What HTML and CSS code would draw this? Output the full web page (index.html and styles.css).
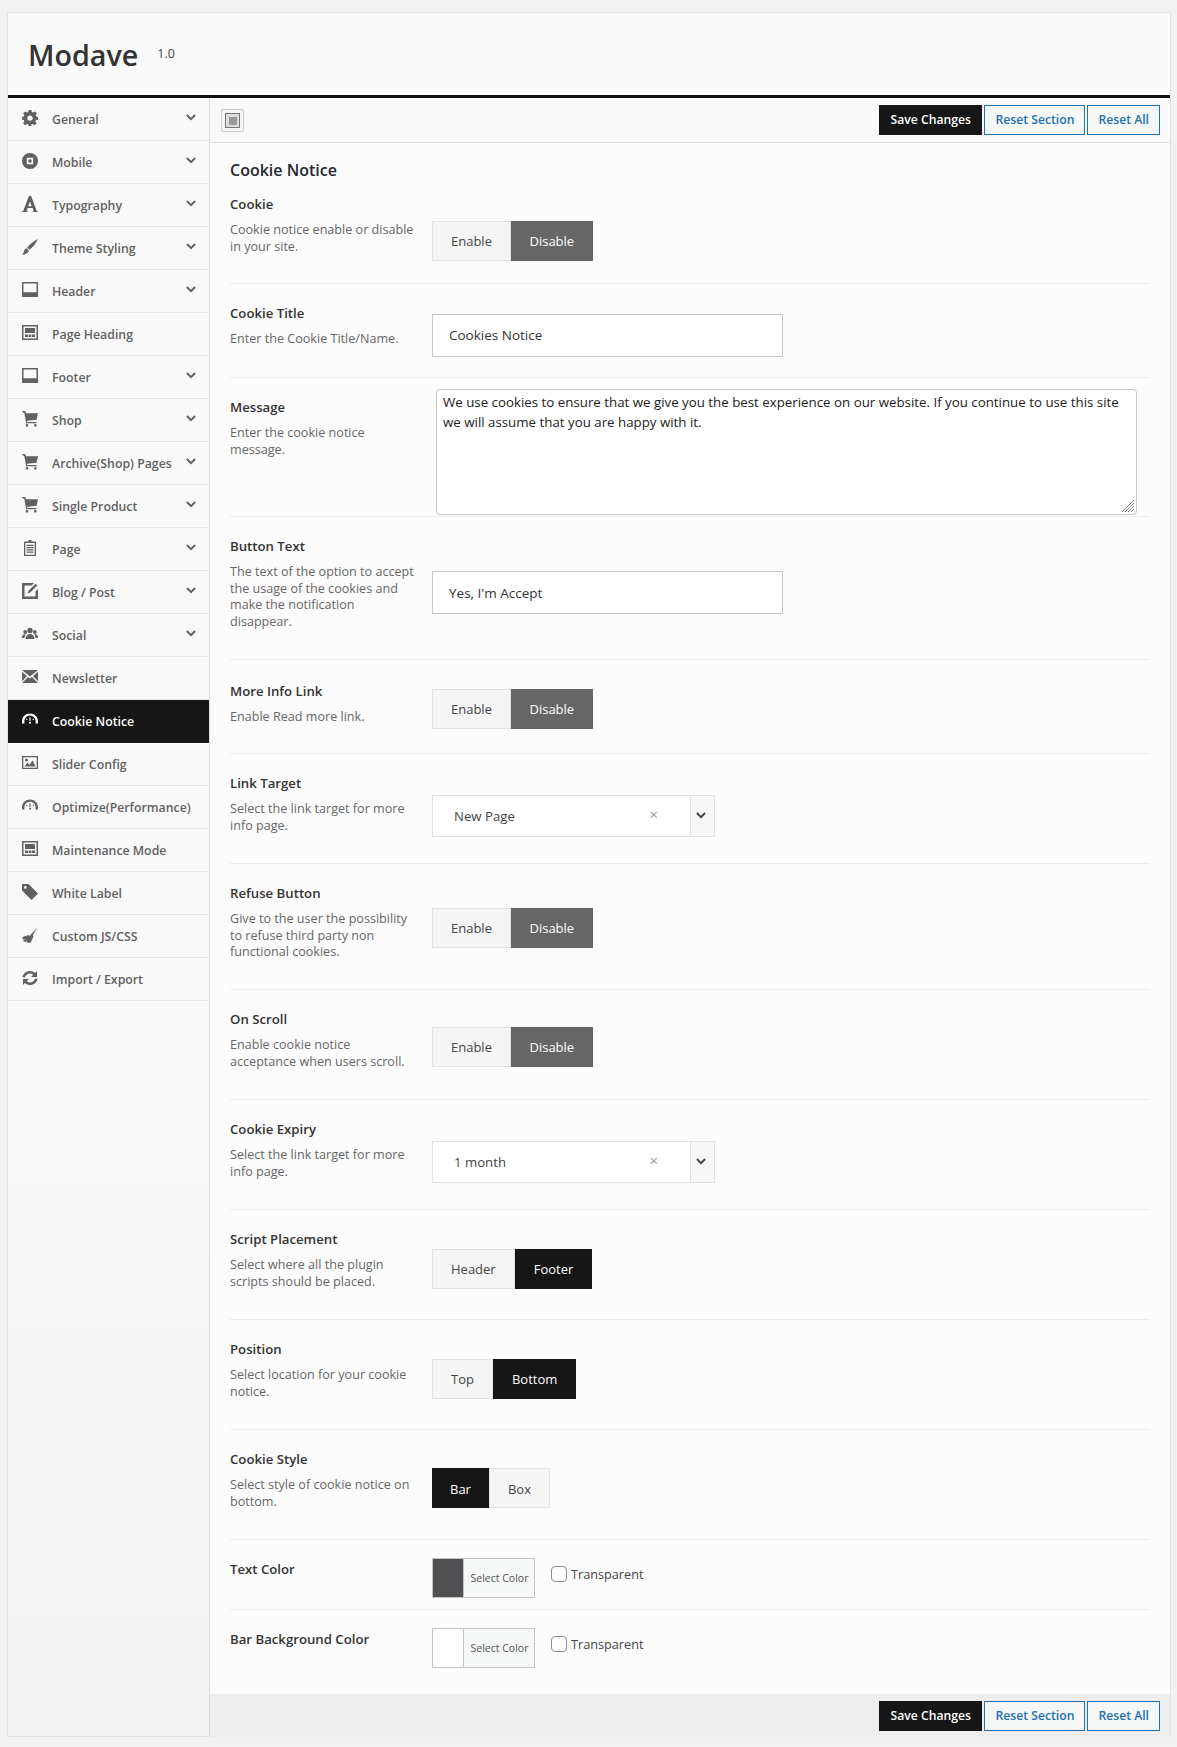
FILE: index.html
```html
<!DOCTYPE html>
<html lang="en">
<head>
<meta charset="utf-8">
<title>Modave Options</title>
<link rel="stylesheet" href="styles.css">
</head>
<body>
<svg class="defs" width="0" height="0">
  <symbol id="i-gear" viewBox="0 0 16 16"><path d="M6.6 0h2.8l.4 2.1 1.3.5L12.9 1.4l2 2-1.2 1.8.5 1.3 1.8.4v2.8l-2.1.4-.5 1.3 1.2 1.8-2 2-1.8-1.2-1.3.5-.4 2.1H6.6l-.4-2.1-1.3-.5-1.8 1.2-2-2 1.2-1.8-.5-1.3L0 9.6V6.800l1.800-.4.5-1.300L1.100 3.400l2-2L4.900 2.600l1.300-.5zM8 5.400a2.700 2.700 0 1 0 0 5.400 2.700 2.700 0 0 0 0-5.400z" fill-rule="evenodd"/></symbol>
  <symbol id="i-mobile" viewBox="0 0 16 16"><path d="M8 0a8 8 0 1 1 0 16A8 8 0 0 1 8 0zM4.800 4.800v6.400h6.400V4.800zM6.400 6.400h3.200v3.200H6.400z" fill-rule="evenodd"/></symbol>
  <symbol id="i-type" viewBox="0 0 16 16"><path d="M0 16v-.6l1.200-.5L6.900 0h2.200l5.700 14.900 1.200.5v.6h-5.600v-.6l1.300-.5-1.100-2.900H5.700l-1.100 2.900 1.300.5v.6zM6.300 10.300h3.400L8 5.600z"/></symbol>
  <symbol id="i-brush" viewBox="0 0 16 16"><path d="M16 0c-1.500 3.500-5 8-8.500 10.800L5.200 8.600C8 5.200 12.500 1.500 16 0zM4.600 9.300l2.200 2.200C6.400 14 3 15.500 0 16c1.800-1.300 1.500-3 2.300-4.800.5-1 1.300-1.600 2.300-1.900z"/></symbol>
  <symbol id="i-header" viewBox="0 0 16 16"><path d="M0 0h16v15H0zM1.500 1.500v8.800h13V1.500z" fill-rule="evenodd"/></symbol>
  <symbol id="i-layout" viewBox="0 0 16 16"><path d="M0 0h16v15H0zM1.500 1.500v12h13v-12zM3 3h10v5H3zM3 9.500h3v2.500H3zM6.700 9.500h2.600v2.500H6.700zM10 9.500h3v2.500h-3z" fill-rule="evenodd"/></symbol>
  <symbol id="i-cart" viewBox="0 0 16 16"><path d="M0 0h2.300c.7 0 1.100.4 1.300 1l.4 1.300h12l-1.400 6.400-9.600 1 .3 1.300h9.300v1.300H4.200L2.300 2 .6 1.300zM5 13a1.300 1.300 0 1 1 0 2.700A1.300 1.300 0 0 1 5 13zm8.300 0a1.300 1.300 0 1 1 0 2.700 1.300 1.300 0 0 1 0-2.700z"/></symbol>
  <symbol id="i-clip" viewBox="0 0 16 16"><path d="M6.500 0h3v1.500H14V16H2V1.500h4.500zM3.300 3v11.700h9.400V3zM4.500 4.700h7v1.200h-7zM4.500 7h7v1.200h-7zM4.500 9.300h7v1.200h-7zM4.500 11.600h7v1.200h-7z" fill-rule="evenodd"/></symbol>
  <symbol id="i-edit" viewBox="0 0 16 16"><path d="M0 0h12l-2.500 2.500H2.500v11h11V8.500L16 6v10H0zM13.500.8l1.700 1.700-7 7-2.700 1 1-2.700z" fill-rule="evenodd"/></symbol>
  <symbol id="i-group" viewBox="0 0 16 16"><circle cx="8" cy="4.500" r="2.700"/><circle cx="3.200" cy="6" r="1.900"/><circle cx="12.800" cy="6" r="1.900"/><path d="M3.500 13c0-3 1.800-5 4.500-5s4.500 2 4.500 5zM0 12c0-2 .8-3.700 2.800-3.700.4 0 .8.100 1 .2-.8 1-1.300 2.100-1.400 3.500zM16 12c0-2-.8-3.700-2.800-3.700-.4 0-.8.100-1 .2.800 1 1.300 2.100 1.400 3.500z"/></symbol>
  <symbol id="i-mail" viewBox="0 0 16 16"><path d="M0 1h16L8 7.500zM0 2.800l5 4.200-5 5.200zM16 2.800v9.400L11 7zM6 7.900l2 1.600 2-1.600 6 6.100H0z"/></symbol>
  <symbol id="i-gauge" viewBox="0 0 16 16"><path d="M8 1.500c4.500 0 8 3.300 8 7.800v2.200h-2.400V9.300c0-3.200-2.400-5.600-5.600-5.600S2.400 6.100 2.400 9.300v2.200H0V9.300C0 4.800 3.500 1.500 8 1.500zM7.300 5.400h1.400l-.2 3.800h-1zM4.600 6.600l1 .6-.6 1-1-.6zM11.400 6.600l.6 1-1 .6-.6-1zM8 9.800a1 1 0 1 1 0 2 1 1 0 0 1 0-2z" fill-rule="evenodd"/></symbol>
  <symbol id="i-image" viewBox="0 0 16 16"><path d="M0 1h16v13H0zM1.300 2.300v10.400h13.400V2.300zM2.500 11.500l3-4 2 2.200 3-4.200 3 6zM4.500 3.500a1.500 1.500 0 1 1 0 3 1.500 1.500 0 0 1 0-3z" fill-rule="evenodd"/></symbol>
  <symbol id="i-tag" viewBox="0 0 16 16"><path d="M0 0h6.500L16 9.500 9.500 16 0 6.500zM3.300 2a1.400 1.400 0 1 0 0 2.800 1.400 1.400 0 0 0 0-2.800z" fill-rule="evenodd"/></symbol>
  <symbol id="i-broom" viewBox="0 0 16 16"><path d="M16 0l-5.300 8 .9.900-2.800 6.600c-1.500.3-3 .2-4.300-.1l.8-2.200-1.700 1.800c-1-.3-2-.8-2.800-1.300l3-1.600-3.400.4.200-2.500 5.600-2.100 1.200 1.200z"/></symbol>
  <symbol id="i-refresh" viewBox="0 0 16 16"><path d="M8 1c2 0 3.800.8 5.100 2L15 1v6h-6l2.200-2.200C10.300 4 9.200 3.600 8 3.600c-2.300 0-4.300 1.500-5 3.700H.3C1.100 3.600 4.200 1 8 1zM1 9h6l-2.200 2.200c.9.800 2 1.200 3.200 1.200 2.300 0 4.300-1.500 5-3.700h2.700C14.900 12.400 11.800 15 8 15c-2 0-3.800-.8-5.100-2L1 15z"/></symbol>
  <symbol id="i-chev" viewBox="0 0 10 7"><path d="M.9 1 5 5.100 9.100 1" fill="none" stroke="currentColor" stroke-width="2"/></symbol>
</svg>

<div class="panel">
  <header class="brand">
    <h1 class="brand-name">Modave</h1>
    <span class="brand-version">1.0</span>
  </header>
  <div class="body">
    <nav class="side">
      <a class="nav-item"><svg class="nav-icon"><use href="#i-gear"/></svg><span class="nav-label">General</span><svg class="nav-chev"><use href="#i-chev"/></svg></a>
      <a class="nav-item"><svg class="nav-icon"><use href="#i-mobile"/></svg><span class="nav-label">Mobile</span><svg class="nav-chev"><use href="#i-chev"/></svg></a>
      <a class="nav-item"><svg class="nav-icon"><use href="#i-type"/></svg><span class="nav-label">Typography</span><svg class="nav-chev"><use href="#i-chev"/></svg></a>
      <a class="nav-item"><svg class="nav-icon"><use href="#i-brush"/></svg><span class="nav-label">Theme Styling</span><svg class="nav-chev"><use href="#i-chev"/></svg></a>
      <a class="nav-item"><svg class="nav-icon"><use href="#i-header"/></svg><span class="nav-label">Header</span><svg class="nav-chev"><use href="#i-chev"/></svg></a>
      <a class="nav-item"><svg class="nav-icon"><use href="#i-layout"/></svg><span class="nav-label">Page Heading</span></a>
      <a class="nav-item"><svg class="nav-icon"><use href="#i-header"/></svg><span class="nav-label">Footer</span><svg class="nav-chev"><use href="#i-chev"/></svg></a>
      <a class="nav-item"><svg class="nav-icon"><use href="#i-cart"/></svg><span class="nav-label">Shop</span><svg class="nav-chev"><use href="#i-chev"/></svg></a>
      <a class="nav-item"><svg class="nav-icon"><use href="#i-cart"/></svg><span class="nav-label">Archive(Shop) Pages</span><svg class="nav-chev"><use href="#i-chev"/></svg></a>
      <a class="nav-item"><svg class="nav-icon"><use href="#i-cart"/></svg><span class="nav-label">Single Product</span><svg class="nav-chev"><use href="#i-chev"/></svg></a>
      <a class="nav-item"><svg class="nav-icon"><use href="#i-clip"/></svg><span class="nav-label">Page</span><svg class="nav-chev"><use href="#i-chev"/></svg></a>
      <a class="nav-item"><svg class="nav-icon"><use href="#i-edit"/></svg><span class="nav-label">Blog / Post</span><svg class="nav-chev"><use href="#i-chev"/></svg></a>
      <a class="nav-item"><svg class="nav-icon"><use href="#i-group"/></svg><span class="nav-label">Social</span><svg class="nav-chev"><use href="#i-chev"/></svg></a>
      <a class="nav-item"><svg class="nav-icon"><use href="#i-mail"/></svg><span class="nav-label">Newsletter</span></a>
      <a class="nav-item is-active"><svg class="nav-icon"><use href="#i-gauge"/></svg><span class="nav-label">Cookie Notice</span></a>
      <a class="nav-item"><svg class="nav-icon"><use href="#i-image"/></svg><span class="nav-label">Slider Config</span></a>
      <a class="nav-item"><svg class="nav-icon"><use href="#i-gauge"/></svg><span class="nav-label">Optimize(Performance)</span></a>
      <a class="nav-item"><svg class="nav-icon"><use href="#i-layout"/></svg><span class="nav-label">Maintenance Mode</span></a>
      <a class="nav-item"><svg class="nav-icon"><use href="#i-tag"/></svg><span class="nav-label">White Label</span></a>
      <a class="nav-item"><svg class="nav-icon"><use href="#i-broom"/></svg><span class="nav-label">Custom JS/CSS</span></a>
      <a class="nav-item"><svg class="nav-icon"><use href="#i-refresh"/></svg><span class="nav-label">Import / Export</span></a>
    </nav>
    <main class="main">
      <div class="bar bar-top">
        <span class="layout-btn"><span class="layout-glyph"><span class="layout-glyph-in"></span></span></span>
        <div class="bar-actions">
          <button class="btn-save">Save Changes</button>
          <button class="btn-reset">Reset Section</button>
          <button class="btn-reset">Reset All</button>
        </div>
      </div>
      <div class="content">
        <h2 class="section-title">Cookie Notice</h2>

        <section class="row row-first">
          <div class="info"><h3 class="name">Cookie</h3><p class="desc">Cookie notice enable or disable in your site.</p></div>
          <div class="ctl ctl-seg"><div class="seg"><span class="opt">Enable</span><span class="opt is-grey">Disable</span></div></div>
        </section>

        <section class="row">
          <div class="info"><h3 class="name">Cookie Title</h3><p class="desc">Enter the Cookie Title/Name.</p></div>
          <div class="ctl ctl-field"><div class="field">Cookies Notice</div></div>
        </section>

        <section class="row row-msg">
          <div class="info"><h3 class="name">Message</h3><p class="desc">Enter the cookie notice message.</p></div>
          <div class="ctl ctl-msg"><div class="area">We use cookies to ensure that we give you the best experience on our website. If you continue to use this site we will assume that you are happy with it.<svg class="grip" viewBox="0 0 14 14"><path d="M13 1 1 13M13 4 4 13M13 7 7 13M13 10 10 13" stroke="#7d7d7d" stroke-width="1" fill="none"/></svg></div></div>
        </section>

        <section class="row">
          <div class="info"><h3 class="name">Button Text</h3><p class="desc">The text of the option to accept the usage of the cookies and make the notification disappear.</p></div>
          <div class="ctl ctl-field"><div class="field">Yes, I'm Accept</div></div>
        </section>

        <section class="row row-more">
          <div class="info"><h3 class="name">More Info Link</h3><p class="desc">Enable Read more link.</p></div>
          <div class="ctl ctl-seg"><div class="seg"><span class="opt">Enable</span><span class="opt is-grey">Disable</span></div></div>
        </section>

        <section class="row">
          <div class="info"><h3 class="name">Link Target</h3><p class="desc">Select the link target for more info page.</p></div>
          <div class="ctl ctl-select"><div class="select"><span class="select-val">New Page</span><span class="select-x">×</span><span class="select-arrow"><svg class="select-chev"><use href="#i-chev"/></svg></span></div></div>
        </section>

        <section class="row">
          <div class="info"><h3 class="name">Refuse Button</h3><p class="desc">Give to the user the possibility to refuse third party non functional cookies.</p></div>
          <div class="ctl ctl-seg-flat"><div class="seg"><span class="opt">Enable</span><span class="opt is-grey">Disable</span></div></div>
        </section>

        <section class="row">
          <div class="info"><h3 class="name">On Scroll</h3><p class="desc">Enable cookie notice acceptance when users scroll.</p></div>
          <div class="ctl ctl-seg"><div class="seg"><span class="opt">Enable</span><span class="opt is-grey">Disable</span></div></div>
        </section>

        <section class="row">
          <div class="info"><h3 class="name">Cookie Expiry</h3><p class="desc">Select the link target for more info page.</p></div>
          <div class="ctl ctl-select"><div class="select"><span class="select-val">1 month</span><span class="select-x">×</span><span class="select-arrow"><svg class="select-chev"><use href="#i-chev"/></svg></span></div></div>
        </section>

        <section class="row">
          <div class="info"><h3 class="name">Script Placement</h3><p class="desc">Select where all the plugin scripts should be placed.</p></div>
          <div class="ctl ctl-seg-low"><div class="seg"><span class="opt">Header</span><span class="opt is-dark">Footer</span></div></div>
        </section>

        <section class="row">
          <div class="info"><h3 class="name">Position</h3><p class="desc">Select location for your cookie notice.</p></div>
          <div class="ctl ctl-seg-low"><div class="seg"><span class="opt">Top</span><span class="opt is-dark">Bottom</span></div></div>
        </section>

        <section class="row">
          <div class="info"><h3 class="name">Cookie Style</h3><p class="desc">Select style of cookie notice on bottom.</p></div>
          <div class="ctl ctl-seg-low"><div class="seg"><span class="opt opt-tight is-dark">Bar</span><span class="opt">Box</span></div></div>
        </section>

        <section class="row row-color">
          <div class="info"><h3 class="name">Text Color</h3></div>
          <div class="ctl ctl-color">
            <div class="picker"><span class="swatch swatch-dark"></span><span class="picker-label">Select Color</span></div>
            <label class="check"><span class="box"></span>Transparent</label>
          </div>
        </section>

        <section class="row row-color row-last">
          <div class="info"><h3 class="name">Bar Background Color</h3></div>
          <div class="ctl ctl-color">
            <div class="picker"><span class="swatch"></span><span class="picker-label">Select Color</span></div>
            <label class="check"><span class="box"></span>Transparent</label>
          </div>
        </section>
      </div>
      <div class="bar bar-bottom">
        <div class="bar-actions">
          <button class="btn-save">Save Changes</button>
          <button class="btn-reset">Reset Section</button>
          <button class="btn-reset">Reset All</button>
        </div>
      </div>
    </main>
  </div>
</div>
</body>
</html>
```
FILE: styles.css
```css
* { box-sizing: border-box; }
html, body { margin: 0; padding: 0; }
body {
  background: #f1f1f1;
  font-family: "Open Sans", "Noto Sans", sans-serif;
  font-size: 13px;
  color: #444;
  padding: 12px 6px 10px 7px;
}
.defs { position: absolute; }
.panel {
  border: 1px solid #e2e2e2;
  background: #f9f9f9;
  height: 1725px;
  display: flex;
  flex-direction: column;
}
.brand {
  height: 85px;
  flex: none;
  border-bottom: 3px solid #111;
  padding: 22px 20px 0 20px;
  display: flex;
  align-items: flex-start;
  background: #f9f9f9;
}
.brand-name {
  margin: 0;
  font-size: 28.7px;
  line-height: 40px;
  font-weight: 600;
  color: #333;
}
.brand-version {
  margin: 10px 0 0 19px;
  font-size: 12.5px;
  line-height: 18px;
  color: #444;
}
.body { flex: 1; display: flex; min-height: 0; }
.side {
  width: 202px;
  flex: none;
  border-right: 1px solid #dcdcdc;
  background: linear-gradient(#f9f9f9 60%, #f1f1f1);
}
.nav-item {
  height: 43px;
  display: flex;
  align-items: center;
  border-bottom: 1px solid #e7e7e7;
  padding: 0 13px 0 14px;
  color: #616161;
  font-weight: 600;
  font-size: 12.3px;
}
.nav-item.is-active { background: #161616; color: #fff; border-bottom-color: #161616; }
.nav-icon { width: 16px; height: 16px; fill: currentColor; flex: none; margin: -3px 14px 0 0; }
.nav-label { flex: 1; white-space: nowrap; }
.nav-chev { width: 10px; height: 7px; flex: none; margin-top: -4px; }
.main { flex: 1; display: flex; flex-direction: column; min-width: 0; background: #fcfcfc; }
.bar { display: flex; align-items: center; background: #f9f9f9; flex: none; }
.bar-top { height: 45px; border-bottom: 1px solid #e2e2e2; padding: 0 10px 0 11px; justify-content: space-between; }
.bar-bottom { height: 43px; background: #eee; padding: 2px 10px 0 0; justify-content: flex-end; }
.bar-actions { display: flex; gap: 2px; }
.btn-save, .btn-reset {
  height: 30px;
  font: 600 12.2px/28px "Open Sans", sans-serif;
  padding: 0 10px;
  border-radius: 0;
  white-space: nowrap;
}
.btn-save { background: #161616; border: 1px solid #161616; color: #fff; padding: 0 10.5px; }
.btn-reset { background: #f6f7f7; border: 1px solid #2271b1; color: #2271b1; }
.layout-btn {
  width: 23px; height: 23px;
  border: 1px solid #ccc; border-radius: 2px;
  background: #f6f6f6;
  display: flex; align-items: center; justify-content: center;
}
.layout-glyph { width: 15px; height: 15px; border: 1px solid #777; background: #ddd; padding: 3px 2px 2px 3px; }
.layout-glyph-in { display: block; height: 100%; background: #999; }
.content { flex: 1; padding: 0 20px 0 20px; }
.section-title { margin: 0; padding-top: 15px; font-size: 16px; line-height: 24px; font-weight: 600; color: #23282d; }
.row { display: flex; min-height: 94px; border-bottom: 1px solid #ececec; }
.row-first .info { padding-top: 12px; padding-bottom: 27.9px; }
.row-more .info { padding-top: 21px; padding-bottom: 0; }
.info { width: 202px; flex: none; padding: 19px 16px 28.7px 0; }
.name { margin: 0; font-size: 13.2px; line-height: 20px; font-weight: 600; color: #333; }
.desc { margin: 8px 0 0; font-size: 12.6px; line-height: 16.6px; color: #666; }
.ctl { display: flex; align-items: center; flex: 1; min-width: 0; }
.ctl-seg { padding-top: 4px; }
.ctl-seg-low { padding-top: 8px; }
.ctl-seg-flat { padding-top: 2px; }
.ctl-field { padding-top: 9px; }
.ctl-select { padding-top: 14px; }
.row-first .ctl-seg { padding-top: 16px; }
.seg { display: flex; height: 40px; }
.opt {
  display: flex; align-items: center;
  padding: 1px 18px 0;
  border: 1px solid #e2e2e2;
  background: #f5f5f5;
  color: #444;
  font-size: 13px;
}
.opt.is-grey { background: #666; border-color: #666; color: #fff; padding: 1px 17.5px 0; }
.opt.is-dark { background: #161616; border-color: #161616; color: #fff; }
.opt.opt-tight { padding: 1px 17px 0; }
.field {
  width: 351px; height: 43px;
  border: 1px solid #c8c8c8;
  background: #fff;
  padding: 0 16px;
  display: flex; align-items: center;
  font-size: 13.5px; color: #333;
}
.row-msg .info { padding-bottom: 0; }
.ctl-msg { align-items: flex-start; padding: 11px 13px 1px 4px; }
.area {
  position: relative;
  width: 701px; height: 126px;
  border: 1px solid #c8c8c8; border-radius: 4px;
  background: #fff;
  padding: 2px 6px;
  line-height: 20px;
  font-size: 13.3px; color: #222;
}
.grip { position: absolute; right: 1px; bottom: 1px; width: 14px; height: 14px; }
.select {
  width: 283px; height: 42px;
  display: flex; align-items: center;
  border: 1px solid #e2e2e2;
  background: #fff;
  padding-left: 21px;
  font-size: 13.2px; color: #444;
}
.select-val { flex: 1; }
.select-x { color: #999; margin-right: 32px; font-size: 15px; margin-top: -3px; }
.select-arrow { width: 24px; height: 100%; flex: none; border-left: 1px solid #e2e2e2; background: #f7f7f7; display: flex; align-items: center; justify-content: center; padding-right: 3px; color: #444; }
.select-chev { width: 10px; height: 7px; }
.row-color .info { padding-bottom: 0; }
.row-color { height: 70px; min-height: 0; }
.ctl-color { align-items: flex-start; padding-top: 18px; gap: 16px; }
.row-last { border-bottom: 0; height: 84px; }
.picker { display: flex; width: 103px; height: 40px; border: 1px solid #c3c3c3; background: #f6f7f7; }
.swatch { width: 31px; flex: none; background: #fff; border-right: 1px solid #c3c3c3; }
.swatch-dark { background: #505052; }
.picker-label { flex: 1; text-align: center; padding-left: 1px; font-size: 10.5px; line-height: 38px; color: #555; }
.check { display: flex; align-items: center; gap: 4px; height: 32px; font-size: 12.7px; color: #444; }
.box { width: 16px; height: 16px; border: 1px solid #8c8f94; border-radius: 4px; background: #fff; }
```
